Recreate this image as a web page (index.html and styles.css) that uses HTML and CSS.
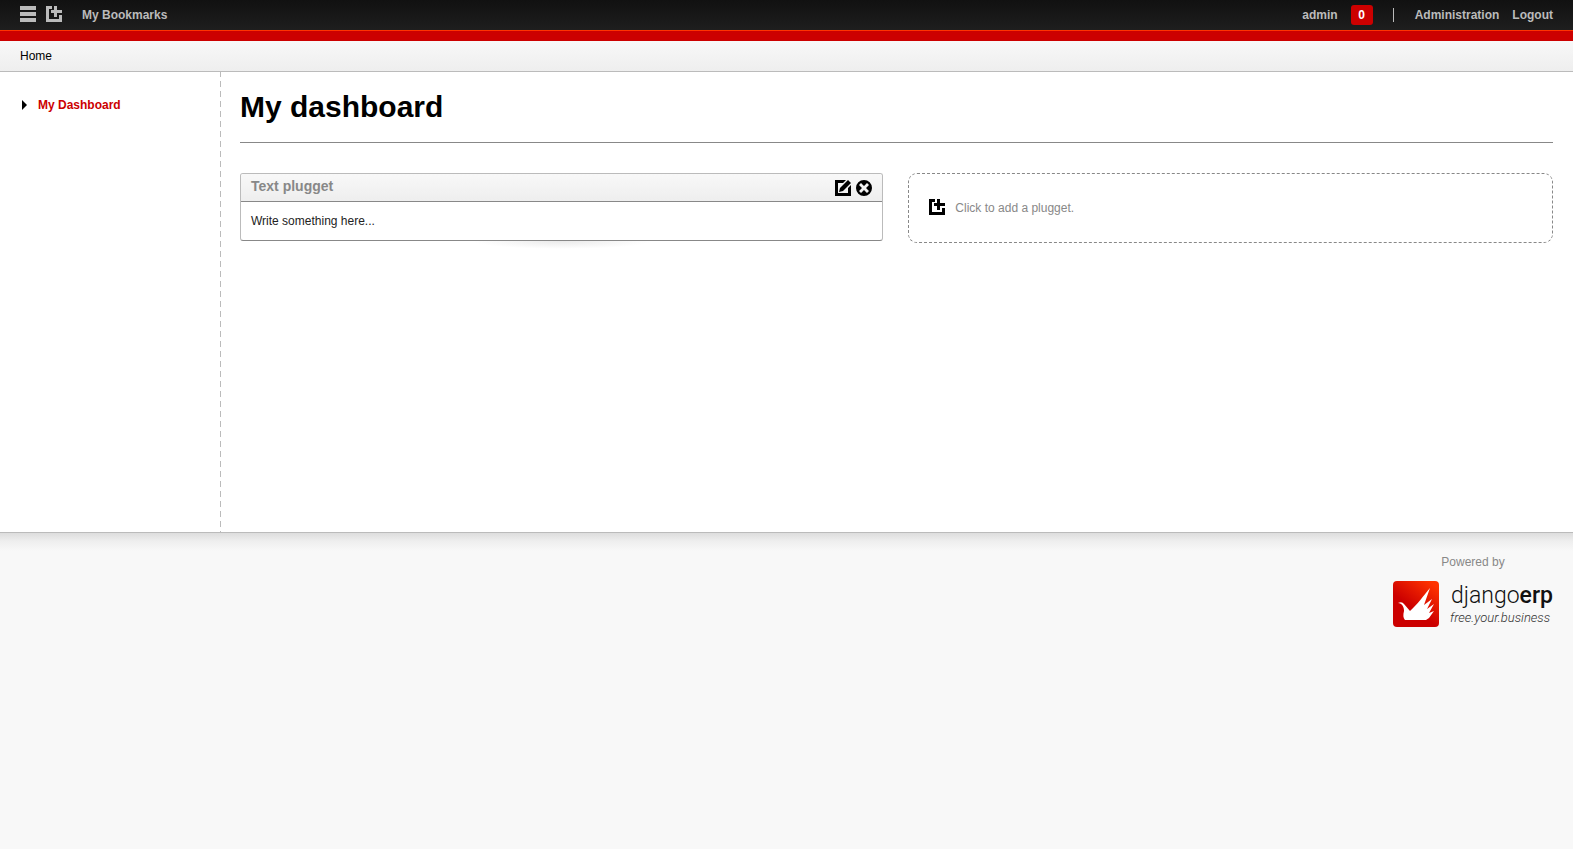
FILE: index.html
```html
<!DOCTYPE html>
<html lang="en">
<head>
<meta charset="utf-8">
<title>My dashboard</title>
<link rel="stylesheet" href="styles.css">
</head>
<body>
<svg class="defs" aria-hidden="true">
  <symbol id="add" viewBox="0 0 16 16"><path d="M0 0h6v3H3v10h10V9h3v7H0zM8 0h3v4h5v3h-5v4H8V7H5V4h3z"/></symbol>
</svg>
<header class="topbar">
  <nav class="group">
    <button class="icon-button" aria-label="Menu"><svg viewBox="0 0 16 16"><path d="M0 0h16v4H0zM0 6h16v4H0zM0 12h16v4H0z"/></svg></button>
    <button class="icon-button add-bookmark" aria-label="Add bookmark"><svg><use href="#add"/></svg></button>
    <a href="#">My Bookmarks</a>
  </nav>
  <nav class="group">
    <a href="#">admin</a>
    <a class="badge" href="#">0</a>
    <span class="divider"></span>
    <a class="administration" href="#">Administration</a>
    <a href="#">Logout</a>
  </nav>
</header>
<nav class="breadcrumb"><a href="#">Home</a></nav>
<div class="page">
  <aside class="sidebar">
    <a href="#"><svg class="arrow" viewBox="0 0 5 10"><path d="M0 0l5 5-5 5z"/></svg>My Dashboard</a>
  </aside>
  <main class="content">
    <h1>My dashboard</h1>
    <div class="pluggets">
      <section class="plugget">
        <div class="plugget-head">
          <h2>Text plugget</h2>
          <div class="tools">
            <button class="icon-button" aria-label="Edit"><svg viewBox="0 0 16 16"><path d="M0 0h11L8 3H3v10h10V8l3-3v11H0zM13 0l3 3-8 8-4 1 1-4z"/></svg></button>
            <button class="icon-button" aria-label="Close"><svg viewBox="0 0 16 16"><path fill-rule="evenodd" d="M8 0a8 8 0 1 1 0 16A8 8 0 0 1 8 0zM5 3L3 5l3 3-3 3 2 2 3-3 3 3 2-2-3-3 3-3-2-2-3 3z"/></svg></button>
          </div>
        </div>
        <p>Write something here...</p>
      </section>
      <button class="add-plugget"><svg><use href="#add"/></svg>Click to add a plugget.</button>
    </div>
  </main>
</div>
<footer class="footer">
  <div class="powered">
    <span>Powered by</span>
    <a class="brand" href="#">
      <svg class="logo" viewBox="0 0 46 46">
        <defs><linearGradient id="red" x1="0.2" y1="0.8" x2="0.8" y2="0"><stop offset="0.3" stop-color="#c00"/><stop offset="1" stop-color="#f30"/></linearGradient></defs>
        <rect width="46" height="46" rx="4" fill="url(#red)"/>
        <path fill="#fff" d="M5 22q4-2 6 1l6 7C24 24 31 14 37 7l-6 17 8-6-5 10 7-5-5 9 5-2-5 7-3 2H12c-2-2-2-5-1-9 0-4-2-8-6-8z"/>
      </svg>
      <span class="wordmark"><span class="name">django<b>erp</b></span><span class="tagline">free.your.business</span></span>
    </a>
  </div>
</footer>
</body>
</html>
```
FILE: styles.css
```css
* { box-sizing: border-box; }
body {
  margin: 0;
  background: #f8f8f8;
  color: #222;
  font: 12px/16px "Liberation Sans", Arial, sans-serif;
}
a { color: inherit; text-decoration: none; }
button { margin: 0; padding: 0; border: 0; background: none; color: inherit; font: inherit; cursor: pointer; }
svg { display: block; width: 16px; height: 16px; fill: currentColor; }
.defs { position: absolute; width: 0; height: 0; }
.topbar {
  display: flex;
  justify-content: space-between;
  height: 41px;
  padding: 0 20px 11px;
  background: linear-gradient(#f30 0 1px, #c00 1px) bottom / 100% 11px no-repeat, linear-gradient(#111, #1e1e1e 30px);
  color: #bbb;
  font-weight: bold;
}
.group { display: flex; align-items: center; }
.topbar .icon-button { margin-bottom: 2px; }
.topbar .add-bookmark { margin: 0 20px 2px 10px; }
.badge {
  margin: 0 20px 0 13px;
  padding: 2px 7px;
  border-radius: 3px;
  background: #c00;
  color: #fff;
  min-width: 22px;
  text-align: center;
}
.divider { width: 1px; height: 14px; background: #bbb; }
.administration { margin: 0 13px 0 21px; }
.breadcrumb {
  padding: 7px 20px;
  border-bottom: 1px solid #bbb;
  background: linear-gradient(#f8f8f8, #eee);
  color: #000;
}
.page { display: flex; min-height: 460px; background: #fff; }
.sidebar {
  width: 221px;
  padding: 25px 20px;
  background: repeating-linear-gradient(#bbb 0 5px, transparent 5px 9px, #bbb 9px 10px) right / 1px 100% no-repeat;
  color: #c00;
  font-weight: bold;
}
.sidebar a { display: flex; align-items: center; }
.arrow { width: 5px; height: 10px; margin: 0 11px 0 2px; color: #000; }
.content { flex: 1; padding: 15px 20px 0 19px; }
h1 {
  margin: 0 0 30px;
  padding-bottom: 15px;
  border-bottom: 1px solid #888;
  color: #000;
  font-size: 30px;
  line-height: 40px;
}
.pluggets { display: grid; grid-template-columns: 49% 1fr; gap: 25px; align-items: start; }
.plugget {
  position: relative;
  border: 1px solid #bbb;
  border-bottom-color: #888;
  border-radius: 3px;
}
.plugget::after {
  content: "";
  position: absolute;
  top: 100%;
  left: 50%;
  width: 180px;
  height: 8px;
  margin: 1px 0 0 -90px;
  background: radial-gradient(ellipse at top, #eaeaea, #fff 70%);
}
.plugget-head {
  display: flex;
  justify-content: space-between;
  height: 28px;
  padding: 4px 10px;
  border-bottom: 1px solid #888;
  border-radius: 2px 2px 0 0;
  background: linear-gradient(#f8f8f8, #eee);
}
h2 { margin: 0; color: #888; font-size: 14px; line-height: 16px; }
.tools { display: flex; align-items: center; gap: 5px; color: #000; }
.plugget p { margin: 0; padding: 11px 10px; }
.add-plugget {
  display: flex;
  align-items: center;
  gap: 10px;
  height: 70px;
  padding: 0 20px;
  border: 1px dashed #888;
  border-radius: 9px;
  color: #888;
}
.add-plugget svg { margin-bottom: 2px; color: #000; }
.footer {
  display: flex;
  justify-content: flex-end;
  padding: 21px 20px;
  border-top: 1px solid #bbb;
  background: linear-gradient(#ddd, #eee 8px, #f8f8f8 18px);
}
.powered { display: flex; flex-direction: column; align-items: center; gap: 11px; color: #888; }
.brand { display: flex; gap: 11px; color: #111; font-family: Roboto, sans-serif; }
.logo { width: 46px; height: 46px; }
.wordmark { display: flex; flex-direction: column; width: 103px; padding-top: 1px; }
.name { align-self: flex-end; font-size: 23px; font-weight: 300; line-height: 28px; }
.name b { font-weight: 500; }
.tagline { color: #333; font-size: 13px; font-style: italic; font-weight: 300; line-height: 16px; }
```
